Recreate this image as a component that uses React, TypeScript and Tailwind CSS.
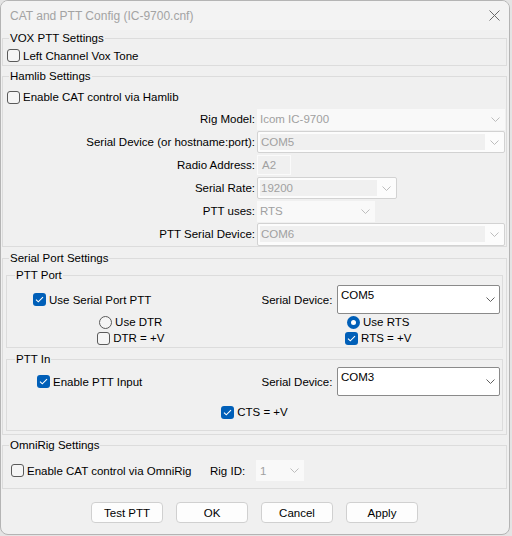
import type { ReactNode } from "react";

function Chevron({ light }: { light?: boolean }) {
  return (
    <svg width="9" height="5" viewBox="0 0 9 5" className="shrink-0">
      <path d="M0.5 0.5l4 4 4-4" fill="none" stroke={light ? "#bdbdbd" : "#606060"} strokeWidth="1" />
    </svg>
  );
}

function Check({ checked }: { checked?: boolean }) {
  if (checked) {
    return (
      <span className="flex h-[13px] w-[13px] shrink-0 items-center justify-center rounded-[3px] bg-[#005fb8]">
        <svg width="9" height="7" viewBox="0 0 9 7">
          <path d="M1 3.6l2.3 2.2L8 1.2" fill="none" stroke="white" strokeWidth="1.1" />
        </svg>
      </span>
    );
  }
  return <span className="h-[13px] w-[13px] shrink-0 rounded-[3px] border border-[#5a5a5a] bg-[#f5f5f5]" />;
}

function Radio({ on }: { on?: boolean }) {
  if (on) {
    return (
      <span className="flex h-[13px] w-[13px] shrink-0 items-center justify-center rounded-full bg-[#005fb8]">
        <span className="h-[5px] w-[5px] rounded-full bg-white" />
      </span>
    );
  }
  return <span className="h-[13px] w-[13px] shrink-0 rounded-full border border-[#5a5a5a] bg-[#f5f5f5]" />;
}

function CheckLabel({ checked, children }: { checked?: boolean; children: ReactNode }) {
  return (
    <span className="flex items-center gap-[3px]">
      <Check checked={checked} />
      <span>{children}</span>
    </span>
  );
}

function Group({
  title,
  inner,
  className,
  children,
}: {
  title: string;
  inner?: boolean;
  className?: string;
  children: ReactNode;
}) {
  return (
    <fieldset className={`min-w-0 border border-[#dcdcdc] ${className ?? ""}`}>
      <legend className={`${inner ? "ml-[8px]" : "ml-[6px]"} px-[1px] leading-[16px]`}>{title}</legend>
      {children}
    </fieldset>
  );
}

// disabled, non-editable combo
function FlatCombo({ value, className }: { value: string; className?: string }) {
  return (
    <div
      className={`flex h-[21px] items-center justify-between bg-[#f9f9f9] pl-[3px] pr-[5px] text-[#a0a0a0] ${className ?? ""}`}
    >
      <span>{value}</span>
      <Chevron light />
    </div>
  );
}

// disabled, editable combo
function EditCombo({ value, className }: { value: string; className?: string }) {
  return (
    <div
      className={`flex h-[22px] items-center rounded-[2px] border border-[#d2d2d2] bg-[#fcfcfc] ${className ?? ""}`}
    >
      <div className="ml-[2px] flex h-[16px] flex-1 items-center bg-[#f0f0f0] pl-[1px] text-[#a0a0a0]">{value}</div>
      <div className="flex w-[19px] justify-center">
        <Chevron light />
      </div>
    </div>
  );
}

function DeviceCombo({ value }: { value: string }) {
  return (
    <div className="ml-auto mr-[2px] flex h-[29px] w-[163px] items-start justify-between rounded-[2px] border border-[#8a8a8a] bg-white pl-[3px] pr-[4px]">
      <span className="pt-[1px] leading-[16px]">{value}</span>
      <span className="self-center">
        <Chevron />
      </span>
    </div>
  );
}

function Row({ label, children }: { label: string; children: ReactNode }) {
  return (
    <>
      <div className="flex items-center justify-end">{label}</div>
      <div className="flex items-center">{children}</div>
    </>
  );
}

function Btn({ children }: { children: ReactNode }) {
  return (
    <button className="flex h-[21px] w-[72px] items-center justify-center rounded-[4px] border border-[#d0d0d0] bg-[#fdfdfd] text-black">
      {children}
    </button>
  );
}

export default function App() {
  return (
    <div className="h-[536px] w-[512px] bg-[#e4e4e4] font-['Liberation_Sans',Arial,sans-serif] text-[11.5px] leading-[16px] text-black">
      <div className="flex h-[535px] w-[510px] flex-col overflow-hidden rounded-[8px] border border-[#b4b4b4] bg-[#f0f0f0]">
        {/* title bar */}
        <div className="flex h-[29px] shrink-0 items-center justify-between bg-[#f3f3f3] pl-[9px] pr-[8px] text-[12px] text-[#a3a3a3]">
          <span>CAT and PTT Config (IC-9700.cnf)</span>
          <svg width="11" height="11" viewBox="0 0 11 11" className="mr-[1px]">
            <path d="M0.5 0.5l10 10M10.5 0.5l-10 10" stroke="#6a6a6a" strokeWidth="1" />
          </svg>
        </div>

        <div className="ml-[1px] mr-[2px] flex flex-col">
          <Group title="VOX PTT Settings">
            <div className="flex h-[19px] items-center pl-[4px]">
              <CheckLabel>Left Channel Vox Tone</CheckLabel>
            </div>
          </Group>

          <Group title="Hamlib Settings" className="mt-[2px]">
            <div className="mt-[2px] flex h-[22px] items-center pl-[4px]">
              <CheckLabel>Enable CAT control via Hamlib</CheckLabel>
            </div>
            <div className="grid auto-rows-[22px] grid-cols-[252px_1fr] gap-x-[2px] gap-y-[1px] pb-[1px] pr-[1px]">
              <Row label="Rig Model:">
                <FlatCombo value="Icom IC-9700" className="w-full" />
              </Row>
              <Row label="Serial Device (or hostname:port):">
                <EditCombo value="COM5" className="w-full" />
              </Row>
              <Row label="Radio Address:">
                <div className="flex h-[20px] w-[34px] items-center border border-[#fafafa] pl-[4px] text-[#a0a0a0]">A2</div>
              </Row>
              <Row label="Serial Rate:">
                <EditCombo value="19200" className="w-[140px]" />
              </Row>
              <Row label="PTT uses:">
                <FlatCombo value="RTS" className="w-[118px]" />
              </Row>
              <Row label="PTT Serial Device:">
                <EditCombo value="COM6" className="h-[23px] w-full" />
              </Row>
            </div>
          </Group>

          <Group title="Serial Port Settings" className="mt-[3px]">
            <div className="mx-[3px] mt-[1px] flex flex-col pb-[3px]">
              <Group title="PTT Port" inner>
                <div className="grid grid-cols-2 pt-[2px] pb-[1px]">
                  <div className="flex h-[29px] items-center pl-[26px]">
                    <CheckLabel checked>Use Serial Port PTT</CheckLabel>
                  </div>
                  <div className="flex h-[29px] items-center pl-[7px]">
                    <span>Serial Device:</span>
                    <DeviceCombo value="COM5" />
                  </div>
                  <div className="flex h-[16px] items-center justify-center">
                    <span className="flex items-center gap-[3px]">
                      <Radio />
                      <span>Use DTR</span>
                    </span>
                  </div>
                  <div className="flex h-[16px] items-center justify-center">
                    <span className="flex items-center gap-[3px]">
                      <Radio on />
                      <span>Use RTS</span>
                    </span>
                  </div>
                  <div className="flex h-[16px] items-center justify-center">
                    <CheckLabel>DTR = +V</CheckLabel>
                  </div>
                  <div className="flex h-[16px] items-center justify-center">
                    <CheckLabel checked>RTS = +V</CheckLabel>
                  </div>
                </div>
              </Group>

              <Group title="PTT In" inner className="mt-[3px]">
                <div className="grid grid-cols-2">
                  <div className="flex h-[29px] items-center pl-[30px]">
                    <CheckLabel checked>Enable PTT Input</CheckLabel>
                  </div>
                  <div className="flex h-[29px] items-center pl-[7px]">
                    <span>Serial Device:</span>
                    <DeviceCombo value="COM3" />
                  </div>
                </div>
                <div className="mb-[2px] flex h-[32px] items-center justify-center">
                  <CheckLabel checked>CTS = +V</CheckLabel>
                </div>
              </Group>
            </div>
          </Group>

          <Group title="OmniRig Settings" className="mt-[2px]">
            <div className="mb-[7px] mt-[7px] flex h-[21px] items-center pl-[8px]">
              <span className="w-[199px]">
                <CheckLabel>Enable CAT control via OmniRig</CheckLabel>
              </span>
              <span className="w-[46px]">Rig ID:</span>
              <FlatCombo value="1" className="w-[48px] pl-[4px]" />
            </div>
          </Group>

          <div className="mt-[13px] flex justify-center gap-[13px]">
            <Btn>Test PTT</Btn>
            <Btn>OK</Btn>
            <Btn>Cancel</Btn>
            <Btn>Apply</Btn>
          </div>
        </div>
      </div>
    </div>
  );
}
